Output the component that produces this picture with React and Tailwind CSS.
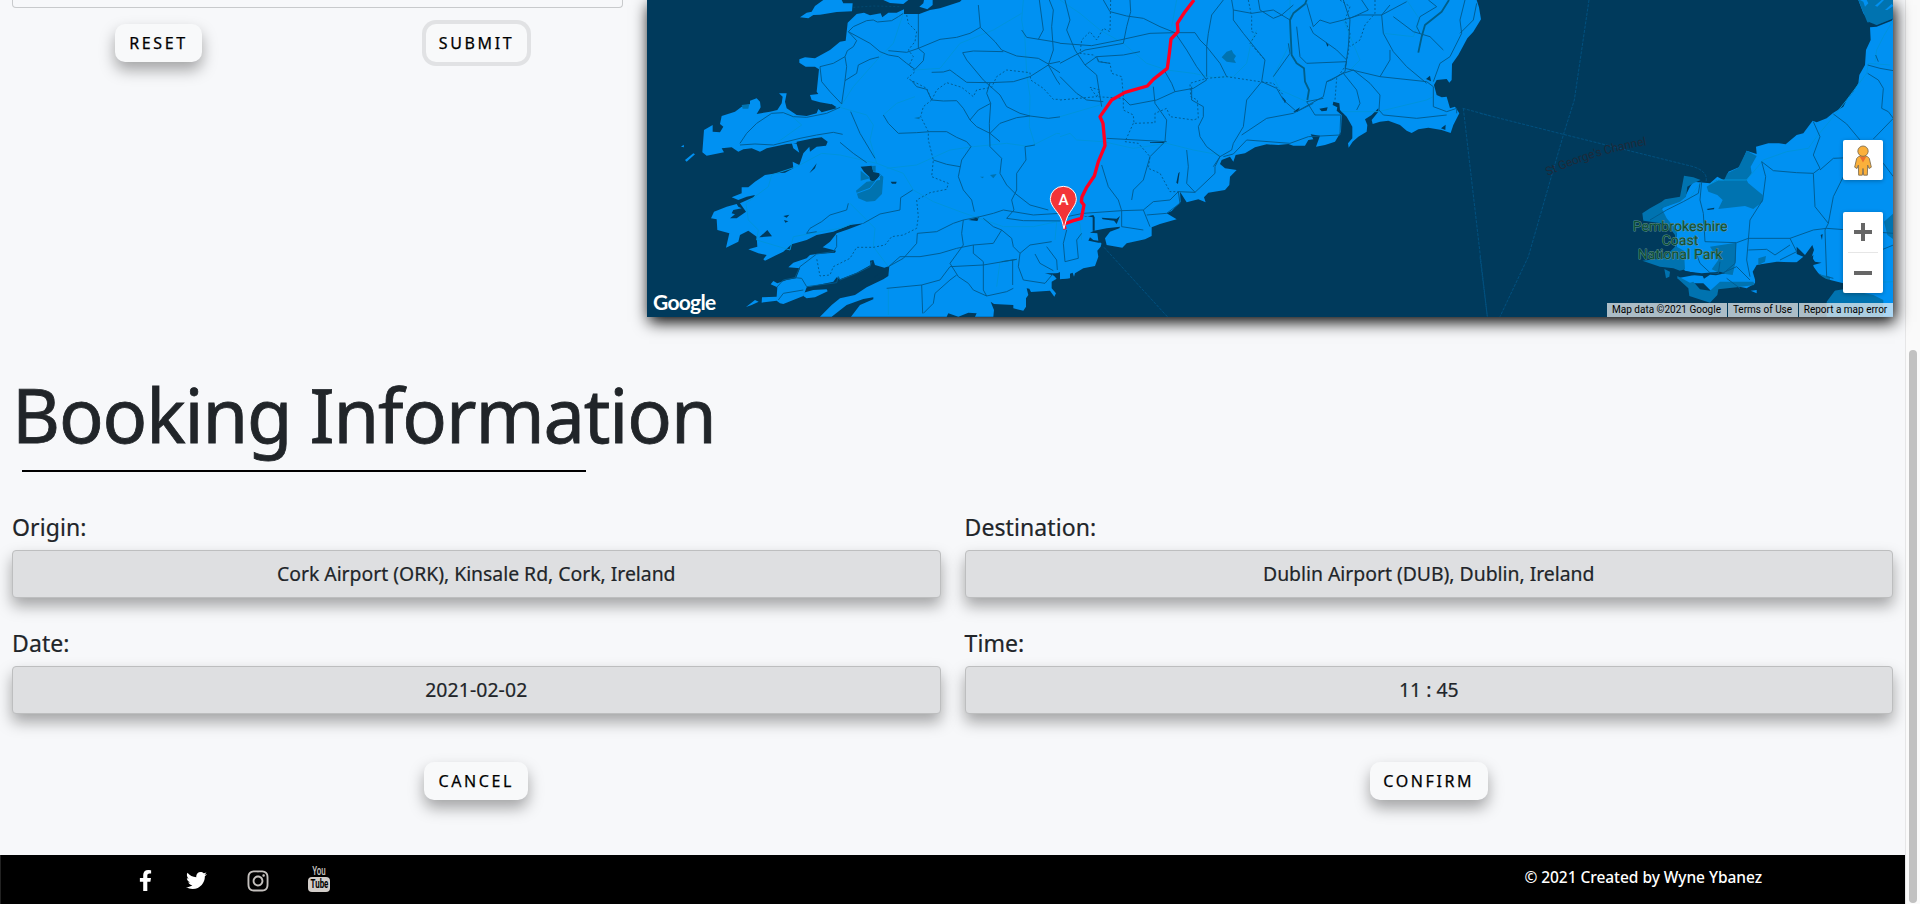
import React from "react";
import { FaFacebookF, FaTwitter, FaInstagram } from "react-icons/fa";

const roadsWest = [
  "M625 95L640 80 680 62 700 60 712 66 755 62 775 50 790 40",
  "M625 95L650 122 640 140 622 152 615 170 580 190 540 200 545 245 570 275 605 312",
  "M625 95L690 130 720 155 745 165 775 170 800 190 825 208",
  "M745 152L800 157 835 145 900 118 950 112 990 100 1021 82",
  "M1015 15L1021 82 1065 125 1085 150 1130 168 1195 175 1225 192 1290 178",
  "M835 42L835 145 853 160 850 182 825 208",
  "M717 171L690 178 655 195 650 220 615 242M615 170L620 200 615 242 605 312",
  "M968 158L1000 153 1090 155M968 158L980 180 1030 240 1080 285 1100 320 1140 340 1170 348 1225 355 1265 350 1290 345",
  "M875 217L910 216 930 210 950 225 980 247 1050 248 1120 245 1170 230 1225 195 1240 150 1235 80 1240 30 1228 0",
  "M1145 90L1160 112 1240 125 1290 136M1195 118L1210 90 1198 0",
  "M1278 0L1280 90 1290 110M1225 195L1250 240 1290 295M1225 195L1270 225 1290 235",
  "M815 242L830 260 860 268 875 300 910 303 950 302 970 325 990 360 1010 380 1050 400 1080 425",
  "M1050 248L1040 280 1052 310 1048 370 1050 440 1085 475 1080 520 1100 555 1125 580 1170 615 1225 630",
  "M1052 310L1015 330 990 360M1050 400L1080 370 1130 353 1170 348",
  "M1155 440L1158 480 1130 520 1130 570 1115 600 1122 630 1100 655M1155 440L1185 435",
  "M730 345L745 370 775 400 830 398 870 395 920 395 950 412 980 425 993 440 965 480 955 530 970 570 995 600 1003 635",
  "M632 335L660 400 705 475M600 427L640 460 680 488",
  "M300 430L320 400 350 370 395 340 430 338 460 350 500 352 560 340 600 322",
  "M300 435L345 432 400 435 480 415 530 405 580 397 608 403",
  "M625 610L620 630 570 645 545 665 510 685 500 700 530 695",
  "M818 570L782 593 780 630 720 642 670 670",
  "M745 800L790 775 830 730 832 700 890 695 940 670 970 660 1020 650 1060 640 1090 630 1180 645 1260 640",
  "M748 798L780 770 840 770 900 760 950 745 1000 735 1060 730 1085 690 1060 680 1030 655",
  "M970 660L965 700 970 735 930 790 955 830 985 850 1000 870 1040 888 1100 875 1120 865M930 800L1030 795 1130 778 1085 785",
  "M740 865L845 855 900 840 930 800M845 855L848 940M850 940L880 910 885 880 930 840 950 825",
  "M1000 735L1000 760 1030 785 1030 870 1040 888M1085 690L1115 715 1120 740 1140 760 1135 800 1150 840 1215 850 1240 820",
  "M1140 760L1170 735 1235 725M1275 690L1272 740 1275 810M1220 740L1250 780 1252 810M1185 762L1200 790 1240 812",
  "M1100 655L1150 662 1290 663M1118 780L1118 855M880 480L920 493 960 500",
  "M410 862L430 840 465 833 485 835 500 860 590 848 595 830 600 840 650 820 690 800 695 785M415 900L430 880 490 870",
  "M530 762L480 800 465 833M590 705L590 740 580 755 530 762",
];

const dottedWest = [
  "M800 45L805 70 830 95 825 125 805 150 820 170 808 195 825 215 802 235 860 265 875 300 850 320 842 350 865 395 865 420 880 480 875 530 925 550 920 568 870 578 830 600 835 650 830 685 790 705 755 710 735 735 700 742 650 742 630 775 580 800 570 825 540 828 530 775",
  "M875 300L890 270 920 248 965 262 1000 290 1010 270 1055 262 1070 230 1100 210 1170 218 1172 240 1210 265 1240 298 1290 298",
];

const lightWest = [
  "M1150 0L1145 60 1155 120 1160 220 1170 290 1168 380 1185 435",
  "M600 322L680 345 700 375 690 420 710 490 790 520 820 570 880 605 960 635 1090 680 1180 680 1250 665",
  "M600 322L640 260 720 170 760 130 790 40M1145 40L1060 90 960 130 900 205 825 210",
  "M710 490L600 465 545 460 470 500 395 525 385 560 318 610 325 660 355 690 350 720 400 735 450 750 460 710 600 685 640 670",
  "M740 505L830 495 885 470 930 450 1000 440 1100 430 1170 440 1250 400 1290 405M630 610L705 685 700 740 745 800",
  "M730 345L770 310 825 290M415 425L485 375 440 335M745 865L745 945M1130 780L1080 785 1070 860M1250 665L1245 720",
];

const roadsMid = [
  "M0 130L95 137 180 120 270 100 345 98 405 98 420 120 440 140 440 230",
  "M15 0L30 60 20 90 45 150 75 195 110 225 120 290 125 320",
  "M75 195L110 170 190 165 240 155M110 170L115 185 150 190",
  "M130 0L150 35 200 48 250 55 300 80 345 98M210 0L212 35 200 80 190 130",
  "M0 190L75 150 190 130M0 230L50 280 80 300 130 305",
  "M345 98L380 150 410 200 440 240 400 265 345 275 290 300 210 315 190 295",
  "M315 215L335 250 345 275M280 260L285 310 320 360 315 425M320 425L140 415",
  "M490 0L455 45 445 100 440 140 480 190 500 230M515 0L520 30 575 40 640 30 690 60",
  "M520 30L520 60 550 100 615 180 605 245 560 300 550 380 520 430 515 450 480 470 465 500 465 520 405 577 355 575",
  "M595 0L600 30 640 55 665 45 700 15M740 10L760 80 780 60 810 70 850 60 900 45 965 45 990 15",
  "M545 405L620 355 700 340 790 290 800 245 850 220 880 210",
  "M490 470L520 462 560 420 690 430 745 410 840 405 842 345 765 345 740 305 790 295",
  "M710 80L720 170 740 190 860 185 855 205 960 230 1100 245 1120 260 1120 320 1160 335 1190 325",
  "M850 0L870 60 865 140 855 215 815 240 800 245M860 180L830 150 760 100 750 80",
  "M965 45L970 100 1000 155 1040 200 1100 250M1000 50L1060 95 1110 110 1150 150M960 230L990 180 990 150",
  "M850 220L890 270 900 310 890 330M880 210L930 250 960 285 957 330 970 345 1070 355 1160 345",
  "M1215 0L1200 60 1205 100 1170 170 1140 190 1120 245M1250 10L1240 60 1200 100M1190 325L1190 340",
  "M1105 0L1130 20 1080 50 1070 80 1080 100M965 45L1040 5M905 0L925 30 870 55",
  "M605 245L650 265 670 300 710 335 760 310M640 230L690 160 685 130",
  "M355 575L330 600 280 605 250 630 185 632 70 640 20 650M185 632L185 680 250 690",
  "M250 630L270 680M355 575L360 610 320 640 260 645M125 495L145 560 175 600 185 632",
  "M215 600L220 570 250 540 270 470 300 440 315 425M395 260L395 300 430 320 430 350 415 380 420 410 440 440 480 470",
  "M480 470L460 500M380 450L385 500 380 550 405 577M20 690L10 730 15 785 55 775 50 720 65 700",
];

const dottedMid = [
  "M152 0L150 95 130 85 110 120 90 95 65 120 60 160 100 165 120 185 150 190 155 220 185 230 190 290 190 330 220 345 222 370 285 368 285 340 320 325 330 350 400 360 415 355 412 300 392 290 390 250 440 235 500 230 600 245 640 250 670 285",
  "M0 300L110 290 90 262 120 270 110 290 190 295M220 370L195 425 235 430 270 470 265 505 300 520 330 575 355 575",
  "M565 0L575 50 575 95 590 100 570 130 615 180M840 0L870 20 855 60 870 100 865 160 855 200 830 235 825 300M945 0L945 40 915 75 900 120 870 140",
];

const lightMid = [
  "M0 0L60 40 120 90 190 130 260 190 320 210 400 220 460 232 520 230 560 190 575 120 590 90",
  "M0 410L30 400 50 420 130 425 220 445 320 430 400 450 480 465M0 350L120 315M350 0L335 80M690 0L690 130 640 230 660 270 740 305",
  "M1040 0L1080 60 1060 110 970 100M850 60L900 180 870 210M845 335L955 335 1100 300 1120 290M20 655L60 670 65 720",
];

const roadsEast = [
  "M1163 195L1200 205 1240 212M1163 220L1195 240 1210 265 1205 325 1225 335 1240 355 1180 417",
  "M1060 342L1100 372 1140 420M1000 365L1020 410 1000 465 1020 505 1000 520 950 518 880 512 845 485",
  "M845 485L857 530 848 600 810 660 805 720 800 780 810 830M1020 510L1060 475 1130 472 1210 490 1240 530",
  "M1000 520L1005 620 1045 670 1060 590 1090 530M1045 670L1035 690 1040 830 1060 835M805 715L930 715 1000 690 1040 685 1240 700",
  "M665 545L660 600 670 640 675 725 770 728 805 715M660 550L655 580 610 605 560 630 510 660",
  "M930 715L950 755 900 780M805 750L860 748 885 765 930 735M768 728L765 790 730 820M720 785L715 820 690 818 660 790 645 750",
  "M725 820L770 800 810 840M740 835L780 865M1187 165L1195 185M1240 735L1180 760",
];

function MapCanvas() {
  return (
    <svg className="block h-[317px] w-[1246px]" viewBox="647 0 1246 317">
      <rect x="647" y="0" width="1246" height="317" fill="#003a5c" />

      {/* South-west coast */}
      <g transform="translate(640 0) scale(.33333)">
        <g fill="#0091f2">
          <path d="M480 52L500 38 515 35 525 18 550 0 605 0 610 10 638 10 636 34 590 36 540 44 520 45 505 55Z" />
          <path d="M730 0L805 0 790 12 750 9ZM838 20L850 10 852 0 878 0 878 15 862 28Z" />
          <path d="M623 68L650 42 672 38 690 46 722 40 727 52 745 38 770 38 792 28 792 42 838 42 870 30 900 25 960 5 965 0H1290V835L1266 836 1262 815 1240 825 1250 836 1235 845 1235 865 1248 880 1243 890 1230 872 1173 876 1168 866 1160 865 1165 885 1158 895 1158 920 1150 932 1120 925 1120 915 1062 912 1052 905 1062 930 1060 950H1005L1010 940 985 938 955 950 925 940 920 950H633L660 915 700 898 700 892 670 897 620 915 575 950H540L575 915 600 895 645 885 680 862 730 838 745 828 748 798 733 803 705 795 700 780 690 782 692 795 650 818 600 838 590 832 580 845 500 862 490 888 430 912 420 910 410 902 365 908 366 892 410 890 412 862 392 853 400 843 412 850 440 840 468 835 480 805 445 802 460 788 500 775 510 765 530 762 585 758 588 752 548 742 570 725 590 700 625 688 672 670 630 675 580 695 530 705 500 720 455 733 430 755 405 767 375 782 370 778 380 765 355 760 325 748 352 740 350 710 325 692 300 705 295 725 258 743 268 700 232 690 230 658 213 655 222 635 260 620 290 612 295 620 305 625 280 630 275 640 285 643 270 655 290 655 318 635 300 610 340 592 345 585 320 590 295 600 275 592 305 580 305 562 325 562 345 545 375 525 410 520 435 518 460 505 458 485 478 495 490 460 508 440 510 455 530 440 558 437 563 425 545 412 520 415 470 425 470 430 440 432 380 445 360 455 335 445 310 448 295 455 275 442 245 445 252 457 200 467 187 457 192 390 218 375 218 395 240 397 250 380 240 372 245 348 285 335 305 320 330 312 330 302 350 295 360 305 362 322 350 342 390 335 412 330 425 310 428 290 417 280 440 280 435 305 440 325 470 345 500 348 530 340 535 327 545 337 590 325 570 312 540 307 515 300 510 285 535 282 530 275 537 208 525 200 497 200 478 188 478 178 495 172 525 175 570 150 600 125 617 122Z" />
          <path d="M490 878L520 870 560 868 563 874 525 892 500 895 490 888ZM318 921L345 900 356 905 335 915ZM455 428L470 432 478 458 460 445ZM135 480L160 460 165 463 140 485ZM123 440L131 434 132 442Z" />
        </g>
        <g fill="#003a5c">
          <path d="M515 510L530 490 525 505 508 520ZM662 500L695 497 700 516 718 520 720 530 700 545 690 540 688 530 672 515ZM752 545L770 545 768 551 756 551ZM358 712L382 690 396 709ZM430 648L448 644 440 653ZM432 660L445 664 436 668ZM985 660L1018 650 1012 663ZM702 832L725 815 728 828 715 836ZM575 312L590 322 545 325ZM1215 820L1255 820 1245 827Z" />
        </g>
        <g fill="#0073b0">
          <path d="M662 512L690 535 662 542ZM695 498L707 497 707 515 700 515ZM648 572L680 545 720 540 720 522 730 530 726 582 705 603 680 605 655 595ZM305 315L328 312 325 326 308 326ZM822 354L840 350 838 358ZM1020 530L1032 530 1028 535ZM1050 525L1070 522 1060 535Z" />
        </g>
        <path d="M650 580L690 565 722 525" stroke="#0091f2" strokeWidth="3" fill="none" />
        <g fill="none" stroke="#0093dc" strokeWidth="3">
          {lightWest.map((d) => <path key={d} d={d} />)}
        </g>
        <g fill="none" stroke="#005a8e" strokeWidth="2.8" strokeLinejoin="round">
          {roadsWest.map((d) => <path key={d} d={d} />)}
        </g>
        <g fill="none" stroke="#005a8e" strokeWidth="2.8" strokeDasharray="6 6">
          {dottedWest.map((d) => <path key={d} d={d} />)}
          <path d="M640 22L700 18 780 20" stroke="#004a72" />
        </g>
      </g>

      {/* South-east coast */}
      <g transform="translate(1060 0) scale(.33333)">
        <path fill="#0091f2" d="M0 0H1250L1257 22 1263 58 1240 95 1222 115 1195 165 1176 192 1175 240 1168 248 1160 237 1130 240 1122 255 1130 285 1145 292 1160 290 1170 325 1185 320 1198 340 1180 375 1172 399 1145 390 1105 383 1075 388 1055 399 1040 392 1020 375 985 362 960 365 938 372 935 360 955 335 955 325 935 345 915 358 922 375 920 395 895 410 878 425 866 443 864 430 877 415 877 380 860 350 840 330 838 310 820 305 818 315 832 322 830 332 845 345 843 395 825 425 795 435 768 440 780 407 752 403 760 418 745 420 735 437 700 437 685 432 655 435 620 433 585 442 555 460 527 465 520 485 510 470 485 480 480 492 495 505 530 510 510 530 508 555 495 570 445 578 432 592 437 607 415 598 380 607 360 575 362 605 335 633 320 640 350 658 300 672 275 682 275 708 255 718 200 730 187 743 140 735 135 715 150 695 178 685 180 680 140 685 102 692 90 698 112 700 115 722 100 720 90 712 85 722 65 718 115 728 125 728 122 740 112 752 115 770 105 798 70 805 45 820 42 830 38 818 28 822 26 835 0 838Z" />
        <path fill="#003a5c" d="M70 647L98 652 98 692 104 692 104 652 100 645 78 650ZM125 653L170 656 180 648 170 672 162 662 128 658ZM130 698L134 745 115 715ZM355 520L359 515 354 552 349 548ZM665 288L678 303 675 310ZM700 335L720 322 712 336ZM778 326L803 322 800 332 785 334ZM1098 237L1110 227 1113 244ZM1143 385L1157 374 1156 390ZM797 125L806 135 802 140ZM270 426L312 425 312 429 270 428Z" />
        <path fill="#0073b0" d="M485 172L500 155 515 150 520 160 528 168 522 178 528 189 500 185Z" />
        <g fill="none" stroke="#0093dc" strokeWidth="3">
          {lightMid.map((d) => <path key={d} d={d} />)}
        </g>
        <g fill="none" stroke="#005a8e" strokeWidth="2.8" strokeLinejoin="round">
          {roadsMid.map((d) => <path key={d} d={d} />)}
        </g>
        <g fill="none" stroke="#005a8e" strokeWidth="2.8" strokeDasharray="6 6">
          {dottedMid.map((d) => <path key={d} d={d} />)}
        </g>
        <g fill="none" stroke="#005f8a" strokeWidth="5.5" strokeLinejoin="round">
          <path d="M740 0L735 12 700 40 690 60 695 165 710 190 732 205 735 245 747 270 742 300" />
          <path d="M1167 0L1145 35 1095 75 1085 110 1075 158" />
        </g>
        <g fill="none" stroke="#00507f" strokeWidth="3" strokeDasharray="9 4">
          <path d="M132 742L322 950M1208 325L1290 347M1210 325L1282 950" />
        </g>
        <path d="M402 0L375 35 352 70 354 95 333 117 328 160 322 205 280 238 262 258 195 277 155 300 120 350 129 370 135 437 115 485 103 528 80 562 66 590 64 605 72 615 64 655 40 662 12 672 15 688" fill="none" stroke="#ff0022" strokeWidth="10" strokeLinejoin="round" />
        <path d="M12 686C7 668 6 655-6 640-18 624-29 612-29 596A39 37 0 0 1 49 596C49 612 38 624 28 640 18 655 17 668 12 686Z" fill="#f33438" stroke="#fff" strokeWidth="3" />
        <text x="11" y="616" textAnchor="middle" fontSize="46" fontWeight="500" fill="#fff" className="font-['Roboto',sans-serif]">A</text>
      </g>

      {/* Pembrokeshire and Cardigan Bay */}
      <g transform="translate(1480 0) scale(.33333)">
        <path fill="#0091f2" d="M1240 0V950H1160L1130 900 1090 868 1040 835 1015 820 997 795 1000 765 970 790 930 787 890 785 830 795 818 815 828 848 800 865 730 850 700 880 670 850 625 850 592 835 660 822 615 812 600 795 590 745 590 700 560 665 535 640 550 622 600 602 615 590 630 560 640 545 690 550 712 530 740 545 745 515 780 500 800 452 830 462 828 440 865 430 897 430 917 433 950 405 970 400 998 362 1010 367 1040 355 1060 338 1090 320 1100 300 1120 275 1135 250 1138 225 1155 195 1158 150 1172 120 1170 80 1170 65 1150 40 1135 0Z" />
        <g fill="#0073b0">
          <path d="M1135 0L1240 0 1240 55 1190 75 1162 67ZM742 520L775 503 800 452 830 468 812 500 815 520 800 540 805 550 730 545ZM680 560L710 540 800 545 848 585 848 605 820 627 795 618 715 627 728 600 712 585 685 575ZM487 640L510 625 545 605 555 598 600 590 605 565 612 527 640 532 662 540 640 550 622 560 618 590 600 605 545 625 560 655 590 690 590 740 612 752 615 808 600 812 580 805 540 800 487 782 550 775 585 740 585 705 560 672 490 662ZM690 740L768 728 768 780 758 825 720 820 695 808 715 780ZM835 775L858 768 855 785 835 795ZM592 835L592 828 630 848 640 845 660 868 690 872 720 845 820 845 825 855 770 862 715 868 712 885 690 908 628 888 625 865ZM553 807L570 815 568 830 558 835ZM1212 665L1240 640 1240 718 1222 705ZM1040 905L1070 865 1110 870 1180 885 1210 900 1210 950 1040 950ZM1015 822L1050 830 1050 845Z" />
        </g>
        <path fill="#0091f2" d="M1185 17L1205 0 1212 0 1192 20ZM1215 30L1235 12 1240 18 1222 30ZM1140 0L1160 0 1165 10 1155 20 1150 5Z" />
        <path fill="#003a5c" d="M950 740L975 765 997 735 1002 750 995 770 1005 785 1025 788 1000 795 1000 810 1030 835 1090 850 1090 868 1062 872 1040 900 1025 910 820 910 830 870 812 872 825 850 828 800 850 792 950 787 970 770 950 762ZM1165 65L1190 75 1240 55 1235 62 1190 80 1170 82ZM600 812L665 820 720 815 735 820 708 826 690 824 672 836 668 828 600 822ZM680 627L703 623 702 628 684 630ZM1022 705L1028 702 1026 720Z" />
        <path fill="#0091f2" d="M812 872L830 870 830 880Z" />
        <g fill="none" stroke="#0093dc" strokeWidth="3">
          <path d="M690 552L715 540 800 540 850 480 920 455 985 445 1010 410 1060 350 1100 300 1160 220 1165 190 1230 195M1210 110L1190 150 1185 185M1210 110L1240 60M660 550L625 600M1120 850L1240 845" />
        </g>
        <g fill="none" stroke="#005a8e" strokeWidth="2.8" strokeLinejoin="round">
          {roadsEast.map((d) => <path key={d} d={d} />)}
        </g>
        <g fill="none" stroke="#00507f" strokeWidth="3" strokeDasharray="9 4">
          <path d="M327 0L283 300 250 405 145 770 60 950M0 340L250 403 640 500Q685 515 678 545M0 770L22 950" />
        </g>
        <path id="channel-curve" d="M203 528Q345 460 520 432" fill="none" />
        <text fontSize="36" fill="#1d2a3a" textRendering="geometricPrecision" className="font-['Roboto',sans-serif]">
          <textPath href="#channel-curve" textLength="312">St George's Channel</textPath>
        </text>
        <g fontSize="42" textAnchor="middle" fill="#0b4f33" stroke="#5f8f94" strokeWidth="3" strokeLinejoin="round" paintOrder="stroke" textRendering="geometricPrecision" className="font-['Roboto',sans-serif]">
          <text x="600" y="693" textLength="284">Pembrokeshire</text>
          <text x="600" y="735" textLength="110">Coast</text>
          <text x="600" y="777" textLength="254">National Park</text>
        </g>
      </g>
    </svg>
  );
}

function Pegman() {
  return (
    <svg viewBox="0 0 54 92" className="h-[31px] w-[18px]">
      <path d="M14 34Q27 26 40 34L46 40 52 66 45 70 41 60 40 90H29L27 70 25 90H14L13 60 9 70 2 66 8 40Z" fill="#fbb03b" stroke="#77674c" strokeWidth="2.5" />
      <path d="M17 34H37L27 52Z" fill="#ec6f2d" />
      <circle cx="27" cy="18" r="15.5" fill="#fbb03b" stroke="#77674c" strokeWidth="2.5" />
    </svg>
  );
}

function MapPanel() {
  return (
    <div className="relative h-[317px] w-[1246px] shadow-[2px_5px_15px_0_#000]">
      <MapCanvas />
      <span className="absolute bottom-[3px] left-[6px] font-['Lato',sans-serif] text-[21px] leading-6 font-bold tracking-[-0.7px] text-white">Google</span>
      <div className="absolute top-[140px] right-[10px] flex h-10 w-10 items-center justify-center rounded-[2px] bg-white shadow-[0_1px_4px_rgba(0,0,0,0.3)]">
        <Pegman />
      </div>
      <div className="absolute top-[212px] right-[10px] flex h-[81px] w-10 flex-col items-center rounded-[2px] bg-white shadow-[0_1px_4px_rgba(0,0,0,0.3)]">
        <svg viewBox="0 0 40 40" className="h-10 w-10"><path d="M11 18H18V11H22V18H29V22H22V29H18V22H11Z" fill="#666" /></svg>
        <div className="h-px w-[30px] bg-[#e6e6e6]" />
        <svg viewBox="0 0 40 40" className="h-10 w-10"><path d="M11 18H29V22H11Z" fill="#666" /></svg>
      </div>
      <div className="absolute right-0 bottom-0 flex h-[14px] gap-px font-['Roboto',sans-serif] text-[10px] leading-[14px] whitespace-nowrap text-black">
        <span className="w-[120px] bg-[#f5f5f5]/70 pr-px text-center">Map data ©2021 Google</span>
        <span className="w-[70px] bg-[#f5f5f5]/70 pr-px text-center">Terms of Use</span>
        <span className="w-[94px] bg-[#f5f5f5]/70 pr-px text-center">Report a map error</span>
      </div>
    </div>
  );
}

function ActionButton({ label, className }) {
  return (
    <button className={`h-[38px] rounded-[10px] bg-[#f8f9fa] pb-px text-center text-[16px] text-black [-webkit-text-stroke:0.25px_#000] ${className}`}>
      {label}
    </button>
  );
}

const raised = "shadow-[0_8px_15px_rgba(0,0,0,0.34)]";

function Field({ label, value, valueClass }) {
  return (
    <div className="h-[116px]">
      <div className="flex h-[42px] items-center pb-[3px] text-[23px] tracking-[0.1px] text-[#212529] [-webkit-text-stroke:0.2px_#212529]">{label}</div>
      <div className="flex h-12 items-center justify-center rounded-[4px] border border-[#bdbebf] bg-[#dedfe1] text-[19.4px] text-[#212529] shadow-[0_8px_15px_rgba(0,0,0,0.34)] [-webkit-text-stroke:0.2px_#212529]">
        <span className={valueClass}>{value}</span>
      </div>
    </div>
  );
}

function YouTubeMark() {
  return (
    <span className="flex w-[22px] flex-col items-center font-['Roboto',sans-serif] text-[12px]">
      <span className="h-[12px] w-[30px] scale-x-[0.66] text-center leading-[12px] font-medium text-[#c9c5c1]">You</span>
      <span className="flex h-[15px] w-[22px] items-center justify-center rounded-[4px] bg-[#d2cdc9]">
        <span className="scale-x-[0.66] leading-[15px] font-bold text-black">Tube</span>
      </span>
    </span>
  );
}

export default function App() {
  return (
    <div className="flex h-[904px] w-[1920px] overflow-hidden bg-[#f7f8fa] font-['Noto_Sans',sans-serif]">
      <main className="flex w-[1905px] flex-col">
        <section className="flex h-[317px]">
          <div className="w-[647px] pl-3">
            <div className="h-[8px] w-[611px] rounded-b-[4px] border border-t-0 border-[#c8cacc]" />
            <div className="flex pt-4">
              <ActionButton label="RESET" className={`ml-[103px] w-[87px] tracking-[2.6px] ${raised}`} />
              <ActionButton label="SUBMIT" className="ml-[224px] w-[101px] tracking-[2.6px] shadow-[0_0_0_4px_#e1e2e4]" />
            </div>
          </div>
          <MapPanel />
        </section>

        <section className="h-[538px] px-3 pt-[50px]">
          <h1 className="flex h-[103px] items-center pb-[7px] text-[74px] leading-none tracking-[-1.15px] whitespace-nowrap text-[#212529] [-webkit-text-stroke:0.8px_#212529]">Booking Information</h1>
          <div className="ml-[10px] h-[2px] w-[564px] bg-black" />
          <div className="grid grid-cols-2 gap-x-6 pt-[36px]">
            <Field label="Origin:" value="Cork Airport (ORK), Kinsale Rd, Cork, Ireland" valueClass="tracking-[-0.02px]" />
            <Field label="Destination:" value="Dublin Airport (DUB), Dublin, Ireland" valueClass="tracking-[-0.02px]" />
            <Field label="Date:" value="2021-02-02" valueClass="tracking-[0.1px]" />
            <Field label="Time:" value="11 : 45" valueClass="tracking-[0px]" />
          </div>
          <div className="grid grid-cols-2 gap-x-6 pt-[22px]">
            <div className="flex justify-center">
              <ActionButton label="CANCEL" className={`w-[104px] tracking-[2.6px] ${raised}`} />
            </div>
            <div className="flex justify-center">
              <ActionButton label="CONFIRM" className={`w-[118px] tracking-[2.6px] ${raised}`} />
            </div>
          </div>
        </section>

        <footer className="flex h-[49px] items-center justify-between border-l border-[#222] bg-black pr-[143px] pl-[134px] text-white">
          <div className="flex items-center pt-0.5">
            <FaFacebookF className="h-[21px] w-[21px]" />
            <FaTwitter className="ml-[30px] h-[21px] w-[21px]" />
            <FaInstagram className="ml-[39px] h-[24px] w-[24px] text-[#c4c0bd]" />
            <span className="ml-[38px] pb-[5px]"><YouTubeMark /></span>
          </div>
          <p className="pb-[3px] text-[15.5px] font-medium tracking-[-0.05px] whitespace-nowrap">© 2021 Created by Wyne Ybanez</p>
        </footer>
      </main>
      <aside className="flex w-[15px] flex-col items-center border-l border-[#e6e6e7] bg-[#fafafa] pt-[350px]">
        <div className="h-[553px] w-[8px] rounded-full bg-[#c1c1c1]" />
      </aside>
    </div>
  );
}
